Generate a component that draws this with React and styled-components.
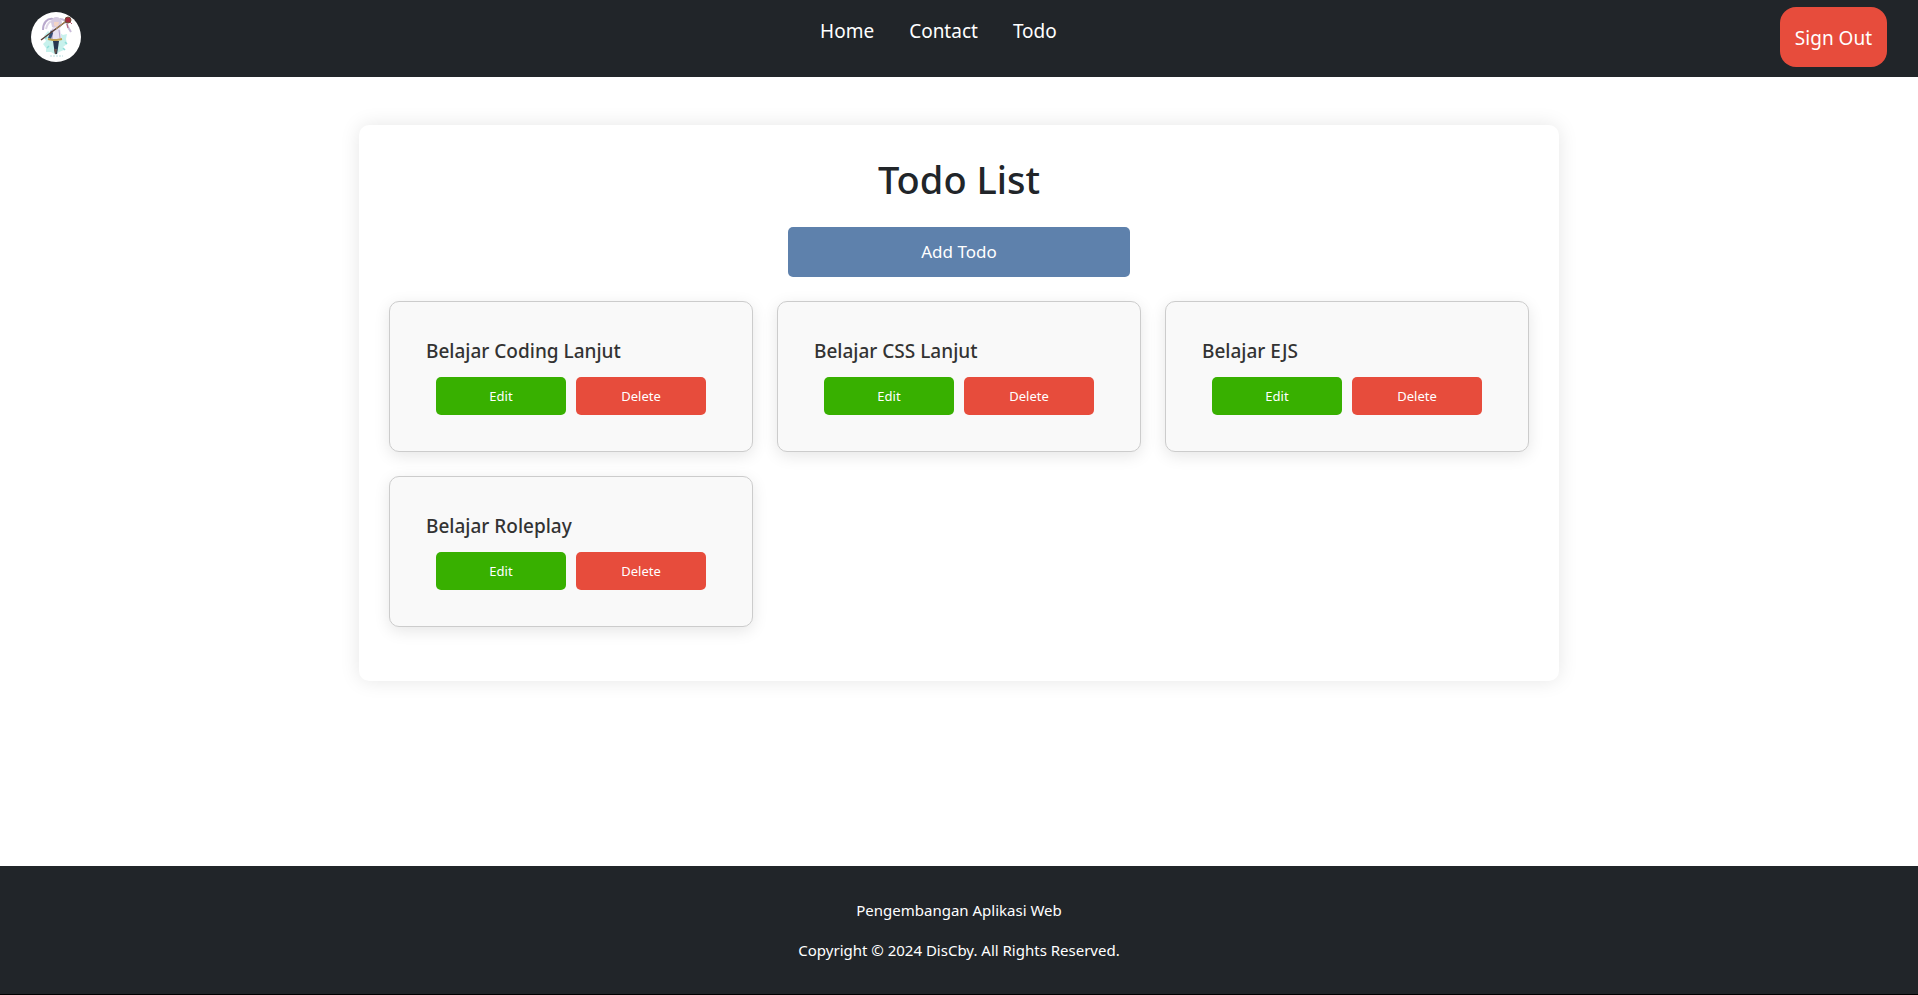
import React from "react";
import styled, { createGlobalStyle } from "styled-components";

const GlobalStyle = createGlobalStyle`
  *, *::before, *::after { box-sizing: border-box; }
  body {
    margin: 0;
    background: #fff;
    color: #212529;
    font-family: "Segoe UI", "Noto Sans", "Open Sans", sans-serif;
    font-size: 15px;
    line-height: 24px;
  }
  h1, h2, p, ul { margin: 0; padding: 0; }
  a { color: inherit; text-decoration: none; }
  button { border: 0; font: inherit; color: #fff; cursor: pointer; }
`;

const Page = styled.div`
  min-height: 100vh;
  display: flex;
  flex-direction: column;
`;

const Header = styled.header`
  display: flex;
  align-items: center;
  justify-content: space-between;
  padding: 7px 31px 10px;
  background: #212529;
  color: #fff;
  font-size: 19px;
`;

const LogoLink = styled.a`
  display: block;
  height: 50px;
  svg { display: block; width: 50px; height: 50px; }
`;

const NavList = styled.ul`
  display: flex;
  gap: 35px;
  padding: 0 0 12px 16px;
  list-style: none;
`;

const SignOut = styled.button`
  height: 60px;
  padding: 2px 15px 0;
  border-radius: 16px;
  background: #e74c3c;
`;

const Main = styled.main`
  flex: 1;
  padding: 48px 24px;
`;

const Panel = styled.section`
  display: flex;
  flex-direction: column;
  align-items: center;
  max-width: 1200px;
  margin: 0 auto;
  padding: 30px 30px 54px;
  border-radius: 10px;
  background: #fff;
  box-shadow: 0 0 20px rgba(0, 0, 0, 0.1);
`;

const Title = styled.h1`
  font-size: 38px;
  font-weight: 500;
  line-height: 48px;
  margin-bottom: 24px;
`;

const AddButton = styled.button`
  width: 30%;
  height: 50px;
  margin-bottom: 24px;
  border-radius: 5px;
  background: #5e81ac;
  font-size: 17px;
`;

const Grid = styled.ul`
  display: grid;
  grid-template-columns: repeat(3, 1fr);
  gap: 24px;
  width: 100%;
  list-style: none;
`;

const Card = styled.li`
  padding: 36px;
  border: 1px solid #ccc;
  border-radius: 10px;
  background: #f9f9f9;
  box-shadow: 0 4px 16px rgba(0, 0, 0, 0.1);
`;

const CardTitle = styled.h2`
  margin-bottom: 13px;
  color: #333;
  font-size: 19px;
  font-weight: 500;
  line-height: 26px;
`;

const Actions = styled.div`
  display: flex;
  justify-content: center;
  gap: 10px;
  padding: 0 10px;
`;

const ActionButton = styled.button`
  flex: 0 1 130px;
  height: 38px;
  border-radius: 5px;
  background: ${(p) => (p.$danger ? "#e74c3c" : "#38b000")};
  font-size: 13px;
`;

const Footer = styled.footer`
  display: flex;
  flex-direction: column;
  gap: 16px;
  padding: 32px 24px;
  border-bottom: 1px solid #000;
  background: #212529;
  color: #fff;
  text-align: center;
`;

const Logo = () => (
  <svg viewBox="0 0 50 50" role="img" aria-label="DisCby">
    <circle cx="25" cy="25" r="25" fill="#fff" />
    <path d="M17 19l4 3 5-3 6 4 4-1-1 5 1 5-4 3 1 3-5 2-3 3-5-3-5 0 0-4-3-4 3-3-2-5z" fill="#b9eee7" opacity=".8" />
    <path d="M18 34l-2 2M34 30l2 2M32 36l2 2M16 25l-2 2" stroke="#8fded9" strokeWidth="1.5" />
    <path d="M22 7c-6-1-10 4-10 11" fill="none" stroke="#b9a9cc" strokeWidth="2" />
    <path d="M22 9c-4 0-6 4-7 8" fill="none" stroke="#ddd4e6" strokeWidth="2" />
    <path d="M29 7c5 0 7 4 8 8l3 5" fill="none" stroke="#c9bcd9" strokeWidth="2" />
    <path d="M20 10c1-6 9-7 11 0l-1 5c-3 2-6 2-9 0z" fill="#d5cae0" />
    <path d="M23 10h5l-1 4-2 1-2-2z" fill="#f3d4c5" />
    <path d="M21 16l4-1 4 1 2 12-6 1-7-2z" fill="#e9e3f2" />
    <path d="M22 17l-1 10M28 18l1 8" fill="none" stroke="#b5a3ca" />
    <path d="M20 18l-3 8 3 1 2-6" fill="#344d74" />
    <path d="M17 27l5 1h4l5-1" fill="none" stroke="#bda04e" strokeWidth="2" />
    <path d="M22 29h6l-1 7-1 6h-2l-1-6z" fill="#26364f" />
    <path d="M23 37h3l-1 5h-1z" fill="#69534c" />
    <path d="M10 28L22 19l15-11" fill="none" stroke="#594038" strokeWidth="1.5" />
    <path d="M25 17l10-8" fill="none" stroke="#bd9755" />
    <circle cx="37" cy="8" r="3" fill="#a52a3c" stroke="#70513a" />
    <path d="M36 12l1 4M39 10l2 2" stroke="#b75d73" />
    <path d="M19 44h13" stroke="#b9dfe1" strokeDasharray="2 1" />
  </svg>
);

const links = ["Home", "Contact", "Todo"];
const todos = ["Belajar Coding Lanjut", "Belajar CSS Lanjut", "Belajar EJS", "Belajar Roleplay"];

export default function App() {
  return (
    <Page>
      <GlobalStyle />
      <Header>
        <LogoLink href="#home"><Logo /></LogoLink>
        <nav>
          <NavList>
            {links.map((name) => (
              <li key={name}><a href={`#${name.toLowerCase()}`}>{name}</a></li>
            ))}
          </NavList>
        </nav>
        <SignOut type="button">Sign Out</SignOut>
      </Header>
      <Main>
        <Panel>
          <Title>Todo List</Title>
          <AddButton type="button">Add Todo</AddButton>
          <Grid>
            {todos.map((todo) => (
              <Card key={todo}>
                <CardTitle>{todo}</CardTitle>
                <Actions>
                  <ActionButton type="button">Edit</ActionButton>
                  <ActionButton type="button" $danger>Delete</ActionButton>
                </Actions>
              </Card>
            ))}
          </Grid>
        </Panel>
      </Main>
      <Footer>
        <p>Pengembangan Aplikasi Web</p>
        <p>Copyright © 2024 DisCby. All Rights Reserved.</p>
      </Footer>
    </Page>
  );
}
